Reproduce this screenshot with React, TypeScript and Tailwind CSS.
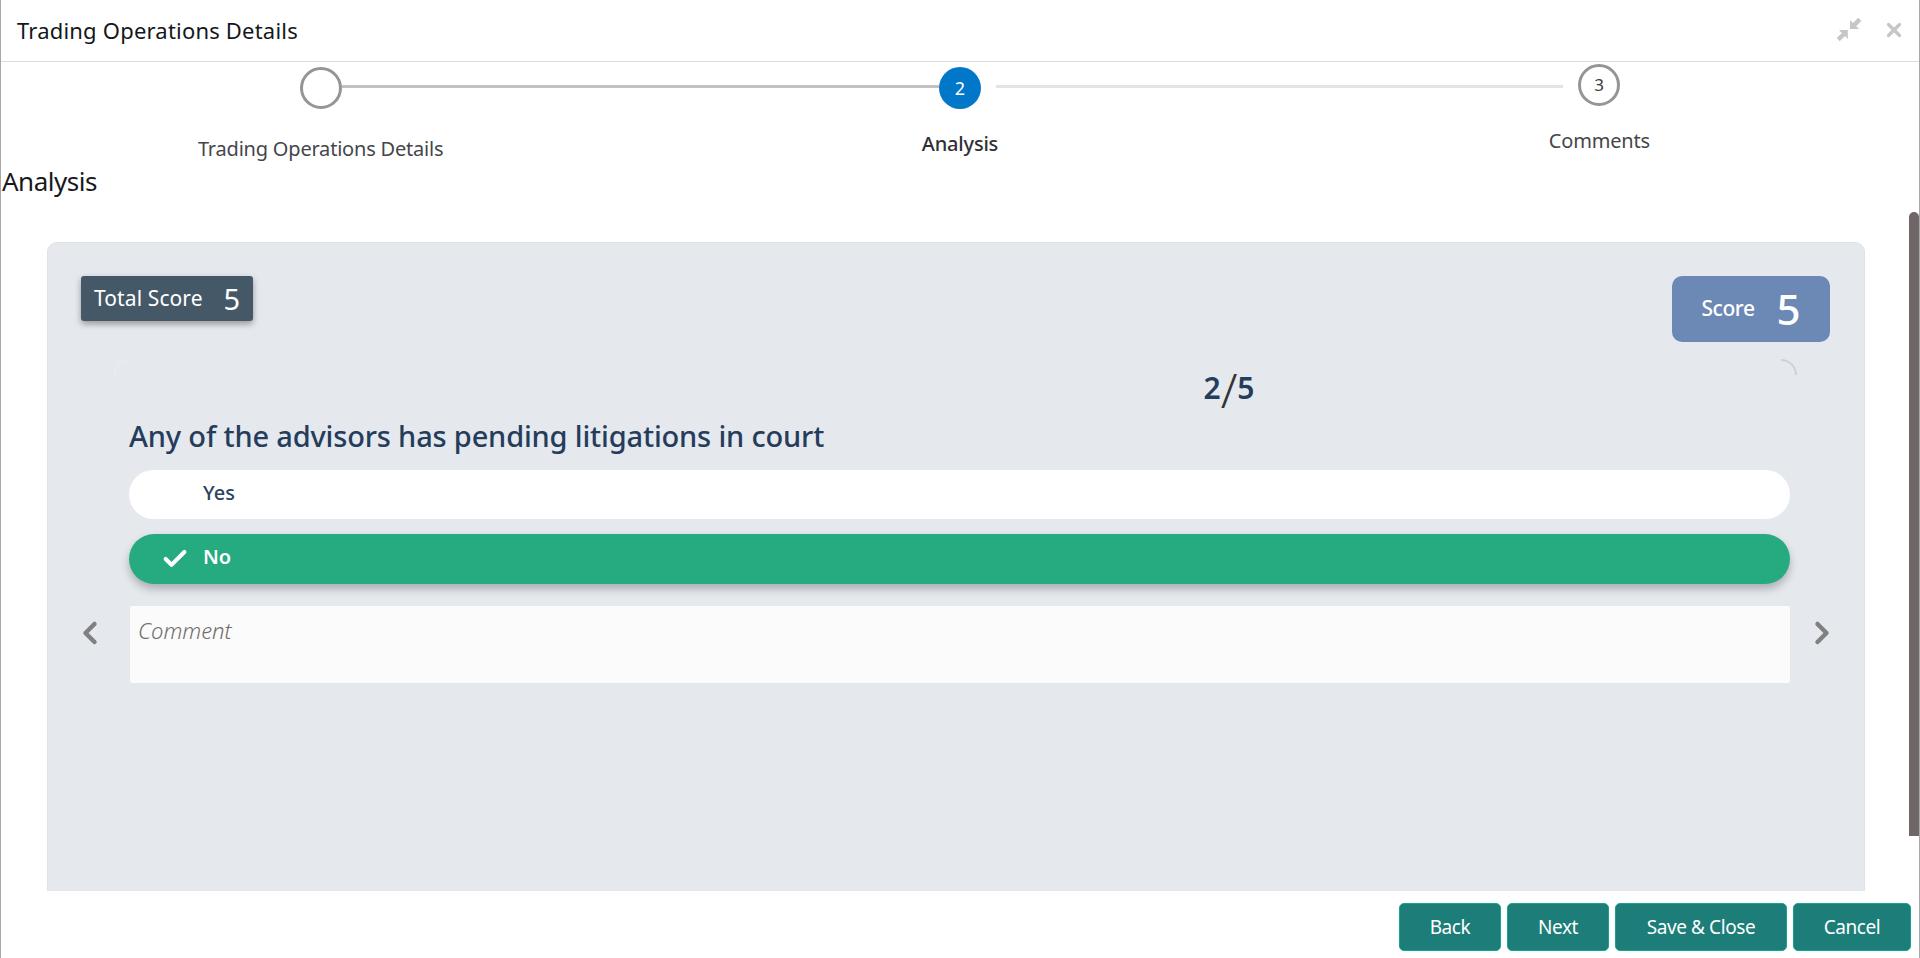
import { Check, ChevronLeft, ChevronRight, X } from "lucide-react";

const Shrink = () => (
  <svg width="29" height="29" viewBox="0 0 26 26" fill="#c4c6c8">
    <path d="M13.5 12.5V4.5l2.6 2.6L20.8 2.5l2.8 2.8-4.6 4.7 2.6 2.5z" />
    <path d="M11.5 13.5v8l-2.6-2.6-4.7 4.6-2.6-2.8 4.6-4.6-2.6-2.6z" />
  </svg>
);

const buttons = [
  { label: "Back", width: "w-[102px]" },
  { label: "Next", width: "w-[102px]" },
  { label: "Save & Close", width: "w-[172px]" },
  { label: "Cancel", width: "w-[118px]" },
];

export default function App() {
  return (
    <div className="h-[958px] w-full overflow-hidden flex flex-col bg-white border-l border-r border-[#a8a8a8] font-['Noto_Sans',sans-serif]">
      <div className="h-[62px] shrink-0 flex items-center justify-between border-b border-[#dcdcdc] pl-4 pr-[14px]">
        <h1 className="text-[22px] tracking-[0.2px] text-[#14171a]">Trading Operations Details</h1>
        <div className="flex items-center gap-[19px] -mt-[2px]">
          <Shrink />
          <X size={22} strokeWidth={3.5} className="text-[#c4c6c8]" />
        </div>
      </div>

      <div className="relative flex-1 min-h-0 overflow-hidden">
        <div className="flex items-start pl-[299px] h-[46px]">
          <div className="mt-[5px] w-[42px] h-[42px] shrink-0 rounded-full border-[3px] border-[#959595]" />
          <div className="mt-[23px] w-[597px] h-[3px] bg-[#c2c2c2]" />
          <div className="mt-[5px] w-[42px] h-[42px] shrink-0 rounded-full bg-[#0077c8] flex items-center justify-center text-white text-[18px]">2</div>
          <div className="mt-[23px] mx-[15px] w-[567px] h-[3px] bg-[#e4e4e4]" />
          <div className="mt-[2px] w-[42px] h-[42px] shrink-0 rounded-full border-[3px] border-[#959595] flex items-center justify-center text-[#3d3d3d] text-[17px]">3</div>
        </div>
        <div className="grid grid-cols-3 items-start text-center text-[20px] leading-[28px] tracking-[-0.2px] text-[#45464a] h-[40px]">
          <div className="pt-[27px]">Trading Operations Details</div>
          <div className="pt-[22px] font-medium text-[#2f3033]">Analysis</div>
          <div className="pt-[19px]">Comments</div>
        </div>
        <div className="text-[26px] leading-[32px] tracking-[-0.5px] pl-[1px] mt-[17px] text-[#17191c]">Analysis</div>

        <div className="ml-[46px] mr-[54px] mt-[45px] h-[700px] rounded-t-[10px] bg-[#e5e8ed] border border-[#dfe2e7] pl-[33px] pr-[34px] pt-[33px]">
          <div className="flex items-start justify-between">
            <div className="w-[172px] h-[45px] rounded-[3px] bg-[#455867] shadow-[0_3px_6px_rgba(0,0,0,0.35)] flex items-center justify-between px-[13px] text-white">
              <span className="text-[21px] tracking-[0.1px]">Total Score</span>
              <span className="text-[29px] leading-none">5</span>
            </div>
            <div className="w-[158px] h-[66px] rounded-[10px] bg-[#6c88b5] flex items-center justify-center gap-[22px] text-white">
              <span className="text-[21px] font-medium tracking-[-0.4px]">Score</span>
              <span className="text-[42px] font-medium leading-none">5</span>
            </div>
          </div>

          <div className="flex items-start mt-[-1px]">
            <div className="w-[48px] shrink-0 pt-[274px]">
              <ChevronLeft size={36} strokeWidth={3} className="text-[#808080] -ml-[9px]" />
            </div>
            <div className="flex-1 min-w-0">
              <div className="flex justify-between ml-[-15px] mr-[-7px] h-[10px] mt-[18px]">
                <span className="w-[16px] h-[16px] rounded-tl-[16px] border-l border-t border-[#eceef1]" />
                <span className="w-[16px] h-[16px] rounded-tr-[16px] border-r-2 border-t-2 border-[#cfd1d4]" />
              </div>
              <div className="text-center pl-[539px] text-[30px] font-semibold leading-[38px] h-[38px] text-[#253d5c]">
                2<span className="relative top-[9px] text-[48px] leading-[0] font-light text-[#333]">/</span>5
              </div>
              <div className="mt-[10px] text-[29px] font-medium leading-[38px] tracking-[-0.17px] text-[#253d5c]">Any of the advisors has pending litigations in court</div>
              <div className="mt-[15px] h-[49px] rounded-full bg-white flex items-center pl-[74px] pb-[3px] text-[20px] font-medium text-[#2c4260]">Yes</div>
              <div className="mt-[15px] h-[50px] rounded-full bg-[#26aa80] shadow-[0_5px_8px_rgba(0,0,0,0.25)] flex items-center pl-[32px] text-[20px] font-semibold text-white">
                <Check size={28} strokeWidth={3.5} className="mr-[14px]" />
                <span className="pb-[4px]">No</span>
              </div>
              <div className="mt-[22px] h-[77px] ml-[1px] bg-[#fbfbfb] rounded-[2px] px-[8px] pt-[11px] text-[22px] leading-[26px] italic font-light text-[#6e6e6e]">Comment</div>
            </div>
            <div className="w-[40px] shrink-0 pt-[274px] flex justify-end">
              <ChevronRight size={36} strokeWidth={3} className="text-[#808080] -mr-[10px]" />
            </div>
          </div>
        </div>

        <div className="absolute top-[150px] right-0 w-[10px] h-[624px] rounded-t-[5px] bg-[#6f6767]" />
      </div>

      <div className="h-[67px] shrink-0 bg-white flex items-start justify-end gap-[6px] pt-[12px] pr-[8px]">
        {buttons.map((b) => (
          <button key={b.label} className={`${b.width} h-[48px] rounded-[5px] bg-[#1c7d79] border border-[#17a392] text-white text-[19px] tracking-[-0.4px]`}>
            {b.label}
          </button>
        ))}
      </div>
    </div>
  );
}
